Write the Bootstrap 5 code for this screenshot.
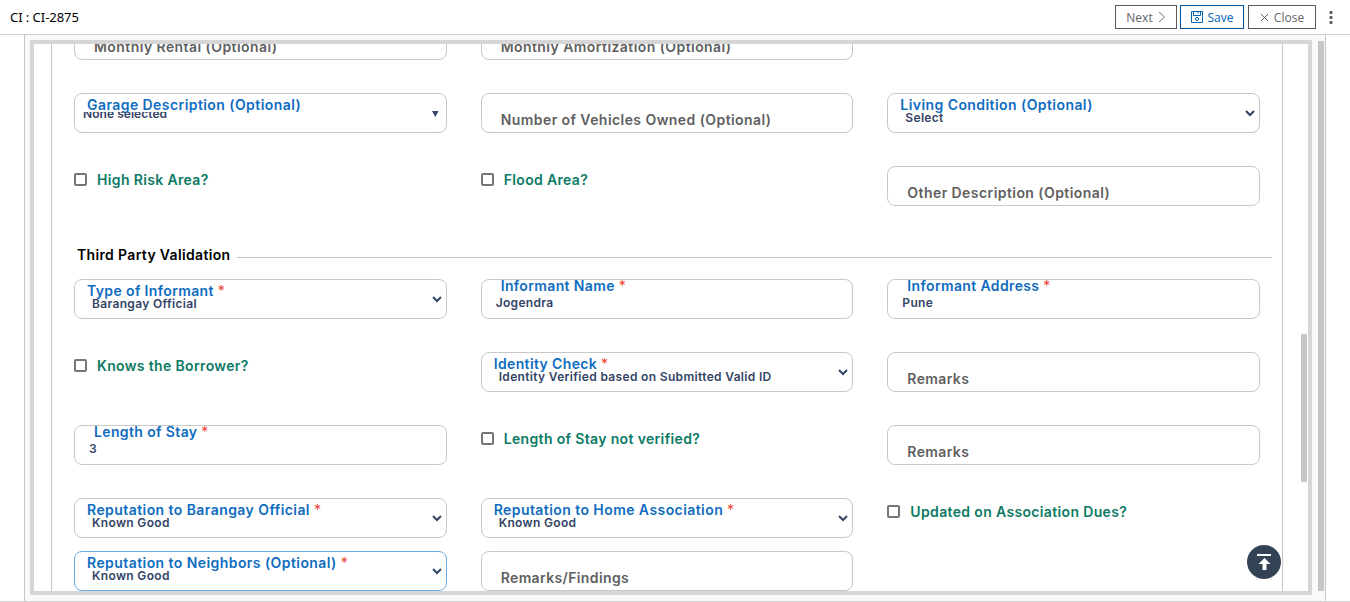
<!DOCTYPE html>
<html lang="en">
<head>
<meta charset="utf-8">
<meta name="viewport" content="width=device-width, initial-scale=1">
<title>CI : CI-2875</title>
<link href="https://cdn.jsdelivr.net/npm/bootstrap@5.3.0/dist/css/bootstrap.min.css" rel="stylesheet">
<style>
body{height:602px;font-family:Inter,"Liberation Sans",sans-serif;color:#000;background:#fff}
.topbar{height:35px;border-bottom:1px solid #d0d0d0;font-family:"Noto Sans","Open Sans",sans-serif;padding:0 16px 0 10px;flex:none}
.case-id{font-size:13px;line-height:34px;letter-spacing:-.05px}
.tool-btn{height:24px;border:1px solid #595959;border-radius:0;font-size:12px;line-height:22px;padding:0;color:#646464;background:#fff;font-family:"Open Sans",sans-serif}
.tool-btn span{padding-top:2px}
.tool-btn.save-btn{border-color:#00539b;color:#0067b8}
.shell{margin:0 24px;border:1px solid #c6c6c6;border-width:0 1px;padding:5px 0 6px 5px;background:#f8f9fb;min-height:0}
.page-end{height:1px;background:#d0d0d0;flex:none}
.frame{width:1282px;border:4px solid #d6d6d6;background:#fff;overflow:hidden;flex:none}
.sheet{width:1232px;margin-left:17px;border:1px solid #c6c6c6;border-width:0 1px;height:547px;overflow:hidden;padding:0 22px;flex:none}
.outer-bar{width:6px;height:550px;background:#c6c6c6;margin:1px 0 0 6px}
.inner-bar{width:6px;height:148px;background:#c6c6c6;margin:290px 0 0 18px}
.fields{display:grid;grid-template-columns:repeat(3,minmax(0,1fr));column-gap:34px;row-gap:33px}
.fields.first{margin-top:-24px}
.fields.tight{margin-top:13px}
.box{height:40px;border:1px solid #c8c8c8;border-radius:8px;position:relative;font-weight:600;white-space:nowrap}
.box.active{border-color:#66afe9}
.cap{font-size:14px;line-height:16px;color:#0f6cbf;letter-spacing:.37px}
.cap.opt{letter-spacing:.43px}
.val{font-size:12px;line-height:12px;color:#334466;letter-spacing:.33px}
.blank{padding:18px 0 0 19px}.blank .cap{color:#5f5f5f}
.input{padding:0 0 0 14px}.input .cap{margin:-2px 0 0 5px}.input .val{margin-top:3px}
.pick{padding:3px 0 0 12px}.pick .val{margin-left:5px;margin-top:-1px}
.chev{position:absolute;right:4px;top:15px}
.multi{padding:3px 0 0 8px}.multi .cap{margin-left:4px}
.multi .val{height:12px;overflow:hidden;margin-top:-1px;line-height:3px;letter-spacing:.05px}
.req{color:#f04030;font-weight:400}
.tick{height:40px;gap:10px;padding-bottom:14px;color:#0b7a64;font-size:14px;font-weight:600;letter-spacing:.35px}
.tick i{width:13px;height:13px;border:2px solid #767676;border-radius:2px;margin-top:1px}
.section{height:73px;font-size:14px;font-weight:600;letter-spacing:.34px;padding:38px 0 0 3px;margin-right:-12px}
.section hr{opacity:1;border-color:#c6c6c6;margin:13px 0 0 7px}
.to-top{position:absolute;left:1247px;top:545px;width:34px;height:34px;border-radius:50%;background:#344256;border:0;padding:0}
</style>
</head>
<body class="d-flex flex-column overflow-hidden position-relative">
<header class="topbar d-flex align-items-center">
  <div class="case-id me-auto">CI : CI-2875</div>
  <button class="btn tool-btn d-flex align-items-center justify-content-center" style="width:62px"><span>Next</span><svg class="ms-1" width="9" height="14" fill="none" stroke="#777"><path d="M2 2l5.500 5L2 12"/></svg></button>
  <button class="btn tool-btn save-btn d-flex align-items-center justify-content-center" style="width:64px;margin-left:3px"><svg class="me-1" width="13" height="13" fill="none" stroke="#0067b8"><path d="M.5.500h11v11H.5zM2.500.5v4h7v-4M7 .5v2"/><circle cx="6" cy="8" r="1.600"/></svg><span>Save</span></button>
  <button class="btn tool-btn d-flex align-items-center justify-content-center" style="width:68px;margin-left:4px"><svg width="9" height="9" style="margin-right:5px" fill="none" stroke="#646464"><path d="M1 1l7 7M8 1L1 8"/></svg><span>Close</span></button>
  <svg width="6" height="16" style="margin-left:12px" fill="#595959"><rect x="1.500" y="2" width="3" height="3" rx="1"/><rect x="1.500" y="7" width="3" height="3" rx="1"/><rect x="1.500" y="12" width="3" height="3" rx="1"/></svg>
</header>
<main class="shell d-flex flex-grow-1">
  <div class="frame d-flex">
    <div class="sheet">
      <div class="fields first">
        <div class="box blank"><div class="cap opt">Monthly Rental (Optional)</div></div>
        <div class="box blank"><div class="cap opt">Monthly Amortization (Optional)</div></div>
        <div></div>
        <div class="box multi"><div class="cap opt">Garage Description (Optional)</div><div class="val">None selected</div><svg class="chev" style="right:7px;top:16px" width="7" height="8"><path d="M0 1h6.500L3.250 7z" fill="#334466"/></svg></div>
        <div class="box blank"><div class="cap opt">Number of Vehicles Owned (Optional)</div></div>
        <div class="box pick"><div class="cap opt">Living Condition (Optional)</div><div class="val">Select</div><svg class="chev" width="10" height="8" fill="none" stroke="#334466" stroke-width="2"><path d="M1 2l4 4 4-4"/></svg></div>
        <div class="tick d-flex align-items-center"><i></i>High Risk Area?</div>
        <div class="tick d-flex align-items-center"><i></i>Flood Area?</div>
        <div class="box blank"><div class="cap opt">Other Description (Optional)</div></div>
      </div>
      <div class="section d-flex align-items-start"><span>Third Party Validation</span><hr class="flex-grow-1"></div>
      <div class="fields">
        <div class="box pick"><div class="cap">Type of Informant <span class="req">*</span></div><div class="val">Barangay Official</div><svg class="chev" width="10" height="8" fill="none" stroke="#334466" stroke-width="2"><path d="M1 2l4 4 4-4"/></svg></div>
        <div class="box input"><div class="cap">Informant Name <span class="req">*</span></div><div class="val">Jogendra</div></div>
        <div class="box input"><div class="cap">Informant Address <span class="req">*</span></div><div class="val">Pune</div></div>
        <div class="tick d-flex align-items-center"><i></i>Knows the Borrower?</div>
        <div class="box pick"><div class="cap">Identity Check <span class="req">*</span></div><div class="val">Identity Verified based on Submitted Valid ID</div><svg class="chev" width="10" height="8" fill="none" stroke="#334466" stroke-width="2"><path d="M1 2l4 4 4-4"/></svg></div>
        <div class="box blank"><div class="cap">Remarks</div></div>
        <div class="box input"><div class="cap">Length of Stay <span class="req">*</span></div><div class="val">3</div></div>
        <div class="tick d-flex align-items-center"><i></i>Length of Stay not verified?</div>
        <div class="box blank"><div class="cap">Remarks</div></div>
        <div class="box pick"><div class="cap opt">Reputation to Barangay Official <span class="req">*</span></div><div class="val">Known Good</div><svg class="chev" width="10" height="8" fill="none" stroke="#334466" stroke-width="2"><path d="M1 2l4 4 4-4"/></svg></div>
        <div class="box pick"><div class="cap opt">Reputation to Home Association <span class="req">*</span></div><div class="val">Known Good</div><svg class="chev" width="10" height="8" fill="none" stroke="#334466" stroke-width="2"><path d="M1 2l4 4 4-4"/></svg></div>
        <div class="tick d-flex align-items-center"><i></i>Updated on Association Dues?</div>
      </div>
      <div class="fields tight">
        <div class="box pick active"><div class="cap opt">Reputation to Neighbors (Optional) <span class="req">*</span></div><div class="val">Known Good</div><svg class="chev" width="10" height="8" fill="none" stroke="#334466" stroke-width="2"><path d="M1 2l4 4 4-4"/></svg></div>
        <div class="box blank"><div class="cap">Remarks/Findings</div></div>
      </div>
    </div>
    <div class="inner-bar"></div>
  </div>
  <div class="outer-bar"></div>
</main>
<div class="page-end"></div>
<button class="to-top" aria-label="Back to top"><svg class="d-block" width="34" height="34" fill="#fff"><path d="M10 9h14v2H10zM17.500 13l6 6h-4v6h-4v-6h-4z"/></svg></button>
<script src="https://cdn.jsdelivr.net/npm/bootstrap@5.3.0/dist/js/bootstrap.bundle.min.js"></script>
</body>
</html>
